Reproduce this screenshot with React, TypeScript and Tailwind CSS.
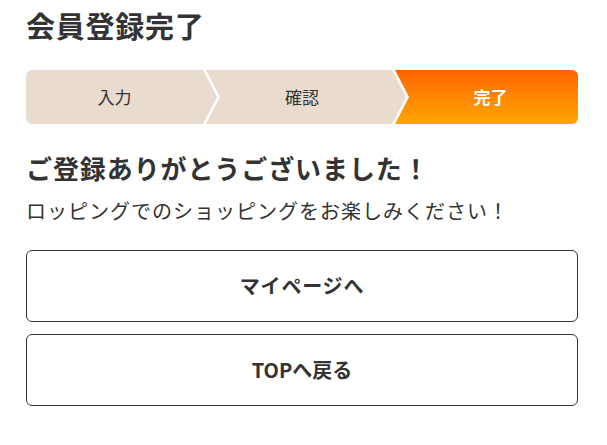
export default function App() {
  const font = { fontFamily: '"Noto Sans CJK JP", "Noto Sans", sans-serif' };
  return (
    <div className="w-[607px] h-[445px] bg-white text-[#333]" style={font}>
      <div className="ml-[26px] w-[552px] pt-[5px]">
        <h1 className="text-[29px] font-bold leading-[40px] tracking-[0.025em]">会員登録完了</h1>
        <div className="mt-[25px] flex h-[54px] rounded-md overflow-hidden">
          <div className="w-[191px] shrink-0 bg-[#eadbcf] flex items-center justify-center pr-[14px] text-[17px] [clip-path:polygon(0_0,calc(100%-14px)_0,100%_50%,calc(100%-14px)_100%,0_100%)]">
            入力
          </div>
          <div className="ml-[-11px] w-[200px] shrink-0 bg-[#eadbcf] flex items-center justify-center pr-[8px] text-[17px] [clip-path:polygon(0_0,calc(100%-14px)_0,100%_50%,calc(100%-14px)_100%,0_100%,14px_50%)]">
            確認
          </div>
          <div className="ml-[-11px] flex-1 bg-gradient-to-b from-[#ff6200] to-[#ffa600] text-white font-bold flex items-center justify-center pl-[8px] text-[17px] [clip-path:polygon(0_0,100%_0,100%_100%,0_100%,14px_50%)]">
            完了
          </div>
        </div>
        <h2 className="mt-[27px] text-[26px] font-bold leading-[34px] tracking-[0.035em]">ご登録ありがとうございました！</h2>
        <p className="mt-[12px] text-[20px] leading-[28px] tracking-[0.05em]">ロッピングでのショッピングをお楽しみください！</p>
        <div className="mt-[25px] flex flex-col gap-[12px]">
          <button className="h-[72px] border border-[#333] rounded-md bg-white text-[20px] font-bold tracking-[0.04em]">マイページへ</button>
          <button className="h-[72px] border border-[#333] rounded-md bg-white text-[20px] font-bold">TOPへ戻る</button>
        </div>
      </div>
    </div>
  );
}
